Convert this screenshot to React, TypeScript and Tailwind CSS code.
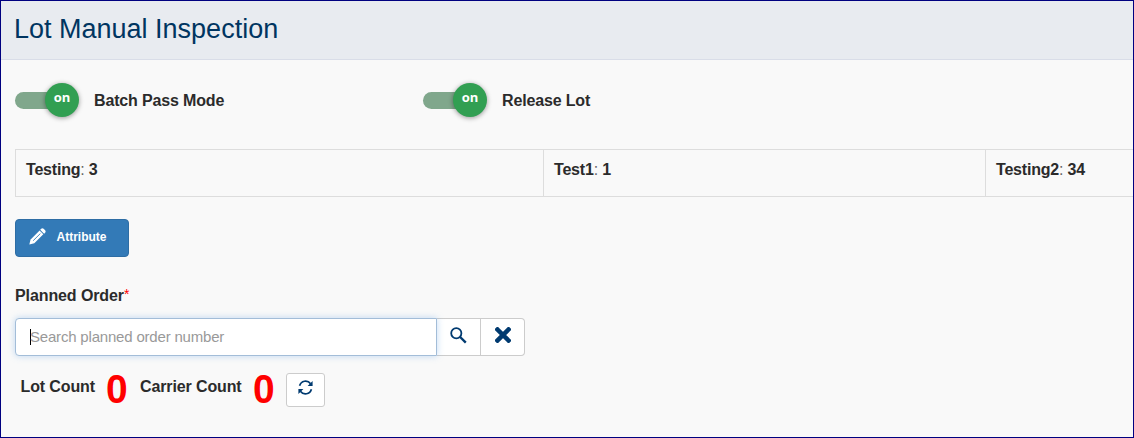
import React from "react";

function Toggle({ label }: { label: string }) {
  return (
    <div className="flex w-[408px] items-center">
      <div className="relative h-[34px] w-16">
        <div className="mt-[9px] h-[17px] w-14 rounded-full bg-[#80a78c]" />
        <div className="absolute top-0 right-0 flex h-[34px] w-[34px] justify-center rounded-full bg-[#319f52] pt-[5px] font-['Open_Sans',sans-serif] text-[13px] leading-[18px] font-bold text-white shadow-[0_1px_5px_rgba(0,0,0,0.4)]">
          on
        </div>
      </div>
      <span className="mt-[2px] ml-[15px] font-bold tracking-[-0.15px]">{label}</span>
    </div>
  );
}

function Cell({ name, value, className }: { name: string; value: string; className: string }) {
  return (
    <div className={`shrink-0 border-l border-[#ddd] pt-[8px] pl-[10px] tracking-[-0.2px] text-[#666] ${className}`}>
      <b className="text-[#2b2b2b]">{name}</b>: <b className="text-[#2b2b2b]">{value}</b>
    </div>
  );
}

function PencilIcon() {
  return (
    <svg width="17" height="17" viewBox="0 0 17 17" fill="none">
      <path d="M0.3 16.6 1.6 11.6 10.6 2.6 14.3 6.3 5.3 15.3Z" fill="#fff" />
      <path d="M11.2 1.8 12.2.8Q13.4-.2 14.6.7L16.1 2.2Q17.1 3.6 16.1 4.7L15.1 5.7Z" fill="#fff" />
      <path d="M4.2 12.7 11.4 5.5" stroke="#337ab7" strokeWidth="0.9" />
    </svg>
  );
}

function SearchIcon() {
  return (
    <svg width="17" height="17" viewBox="0 0 17 17" fill="none" stroke="#003a70">
      <circle cx="6.3" cy="6.2" r="5.1" strokeWidth="1.8" />
      <path d="M10.1 10 15.8 15.6" strokeWidth="2.4" />
    </svg>
  );
}

function CloseIcon() {
  return (
    <svg width="16" height="16" viewBox="0 0 16 16" fill="none">
      <path d="M2.5 2.5 13.5 13.5M13.5 2.5 2.5 13.5" stroke="#003a70" strokeWidth="4.5" strokeLinecap="square" />
    </svg>
  );
}

function RefreshIcon() {
  return (
    <svg width="15" height="15" viewBox="0 0 15 15" fill="none">
      <path d="M1.6 5.8C3 .6 9.5-.5 12.6 3.8M13.4 9.2C12 14.4 5.5 15.5 2.4 11.2" stroke="#003a70" strokeWidth="1.7" />
      <path d="M14.6 1V6H9.6ZM.4 14V9H5.4Z" fill="#003a70" />
    </svg>
  );
}

export default function App() {
  return (
    <div className="flex h-[438px] w-[1134px] flex-col overflow-hidden border border-[#000080] bg-[#f9f9f9] font-['Liberation_Sans',Arial,sans-serif] text-base text-[#2b2b2b]">
      <header className="h-[59px] shrink-0 border-b border-[#d9dde8] bg-[#e8ebf0] pt-[11px] pl-[13px]">
        <h1 className="text-[27px] leading-[34px] text-[#003561]">Lot Manual Inspection</h1>
      </header>
      <main className="flex flex-col pl-[14px]">
        <div className="mt-[23px] flex">
          <Toggle label="Batch Pass Mode" />
          <Toggle label="Release Lot" />
        </div>
        <div className="mt-[32px] flex h-[48px] border-y border-[#ddd]">
          <Cell name="Testing" value="3" className="w-[528px]" />
          <Cell name="Test1" value="1" className="w-[442px]" />
          <Cell name="Testing2" value="34" className="w-[442px]" />
        </div>
        <button className="mt-[22px] flex h-[38px] w-[114px] rounded border border-[#2e6da4] bg-[#337ab7] pt-[8px] pl-[13px] text-white">
          <PencilIcon />
          <span className="ml-[10.5px] text-[12px] leading-[18px] font-bold">Attribute</span>
        </button>
        <label className="mt-[27px] flex h-[24px] font-bold tracking-[-0.1px]">
          Planned Order<span className="text-[14px] leading-[20px] font-normal text-[#f00]">*</span>
        </label>
        <div className="mt-[10px] flex h-[38px] w-[510px]">
          <div className="z-10 flex w-[422px] items-center rounded-l border border-[#a3bdd8] bg-white pl-[14px] text-[15px] tracking-[-0.19px] text-[#999] shadow-[0_0_7px_rgba(102,165,233,0.4)]">
            <span className="h-4 w-px bg-black" />
            <span className="-ml-px">Search planned order number</span>
          </div>
          <button className="flex w-[44px] justify-center border-y border-r border-[#ccc] bg-white pt-[8px]"><SearchIcon /></button>
          <button className="flex w-[44px] justify-center rounded-r border-y border-r border-[#ccc] bg-white pt-[8px]"><CloseIcon /></button>
        </div>
        <div className="mt-[10px] flex h-[48px] pl-[6px] font-bold tracking-[-0.12px]">
          <span className="mt-[9px] -ml-[0.5px] w-[85.5px]">Lot Count</span>
          <span className="w-[34px] text-[41px] leading-[47px] tracking-normal text-[#f00]"><span className="inline-block origin-left scale-x-95">0</span></span>
          <span className="mt-[9px] w-[113px]">Carrier Count</span>
          <span className="w-[33px] text-[41px] leading-[47px] tracking-normal text-[#f00]"><span className="inline-block origin-left scale-x-95">0</span></span>
          <button className="mt-[7px] flex h-[34px] w-[39px] justify-center rounded-[3px] border border-[#ccc] bg-white pt-[6px]"><RefreshIcon /></button>
        </div>
      </main>
    </div>
  );
}
